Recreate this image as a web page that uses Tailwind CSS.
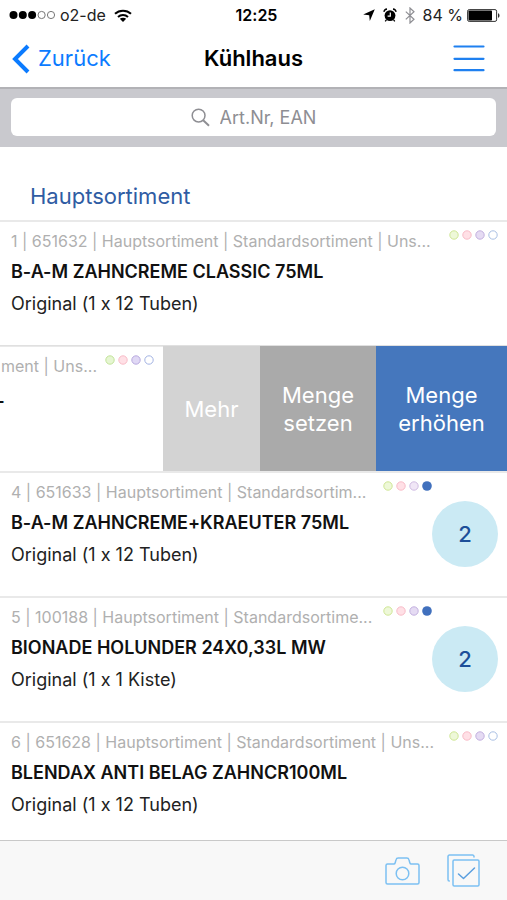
<!DOCTYPE html>
<html lang="de">
<head>
<meta charset="utf-8">
<meta name="viewport" content="width=device-width, initial-scale=1">
<title>Kühlhaus</title>
<script src="https://cdn.jsdelivr.net/npm/@tailwindcss/browser@4"></script>
</head>
<body class="flex h-screen flex-col overflow-hidden bg-white font-['Inter','Liberation_Sans',sans-serif] text-[#111] [font-feature-settings:'calt'_0]">

<div class="grid h-[30px] shrink-0 grid-cols-[1fr_auto_1fr] items-center pl-[9px] pr-[7px] text-base text-[#222]">
  <div class="flex items-center">
    <svg class="h-[10px] w-[47px]" viewBox="0 0 47 10" aria-hidden="true">
      <g fill="#000"><circle cx="4.5" cy="5" r="4"/><circle cx="13.8" cy="5" r="4"/><circle cx="23.1" cy="5" r="4"/></g>
      <g fill="none" stroke="#777"><circle cx="32.6" cy="5" r="3.6"/><circle cx="42" cy="5" r="3.6"/></g>
    </svg>
    <span class="ml-1">o2-de</span>
    <svg class="ml-2 h-[13px] w-[18px]" viewBox="0 0 18 13" aria-hidden="true">
      <g fill="none" stroke="#000" stroke-width="2"><path d="M1 4.8C5.4.6 12.6.6 17 4.8"/><path d="M4 8C6.8 5.4 11.2 5.4 14 8"/></g>
      <path d="M5.8 9.8c1.8-1.5 4.6-1.5 6.4 0L9 13z"/>
    </svg>
  </div>
  <span class="pl-1 font-semibold text-black">12:25</span>
  <div class="flex items-center justify-end">
    <svg class="h-[12px] w-[12px]" viewBox="0 0 12 12" aria-hidden="true"><path d="M11.8.2 6.8 12 6.2 6.2.2 5.4z"/></svg>
    <svg class="ml-2 h-[14px] w-[14px]" viewBox="0 0 14 14" aria-hidden="true">
      <circle cx="7" cy="7.6" r="5.4"/><path d="M.9 3.8C1.2 2.2 2.4 1.2 4 1M13.1 3.8C12.8 2.2 11.6 1.2 10 1M3.4 11.8l-1.2 1.6M10.6 11.8l1.2 1.6" fill="none" stroke="#000" stroke-width="1.3"/>
      <path d="M7.3 4.6v3.5H4.6" fill="none" stroke="#fff" stroke-width="1.2"/>
    </svg>
    <svg class="ml-2 h-[17px] w-[10px]" viewBox="0 0 10 17" fill="none" stroke="#8e8e93" stroke-width="1.2" aria-hidden="true"><path d="M.8 4.6 9 12.2 5 16V1l4 3.8L.8 12.4"/></svg>
    <span class="ml-2">84 %</span>
    <svg class="ml-1 h-[13px] w-[33px]" viewBox="0 0 33 13" aria-hidden="true">
      <rect x=".6" y=".6" width="29" height="11.8" rx="1.6" fill="none" stroke="#333"/><rect x="1.5" y="1.500" width="23.5" height="10" rx=".8"/><path d="M31 4.200c2 .6 2 4 0 4.600z" fill="#333"/>
    </svg>
  </div>
</div>

<header class="grid h-[57px] shrink-0 grid-cols-[1fr_auto_1fr] items-center px-3">
  <button type="button" class="flex items-center gap-2 justify-self-start text-[22px] text-[#0b7bff]">
    <svg class="h-[30px] w-[18px]" viewBox="0 0 18 30" fill="none" stroke="currentColor" stroke-width="4" aria-hidden="true"><path d="M16 2 3 15l13 13"/></svg>
    Zurück
  </button>
  <h1 class="text-[22px] font-semibold text-black">Kühlhaus</h1>
  <button type="button" aria-label="Menü" class="mr-[10px] justify-self-end text-[#1f80f0]">
    <svg class="h-[28px] w-[32px]" viewBox="0 0 32 28" fill="none" stroke="currentColor" stroke-width="2.2" stroke-linecap="round" aria-hidden="true"><path d="M1.500 1.500h29M1.500 13.800h29M1.500 25.200h29"/></svg>
  </button>
</header>

<div class="h-[60px] shrink-0 border-t-2 border-[#b2b2b6] bg-[#c9c9ce] px-[11px] pt-[9px]">
  <label class="flex h-[38px] items-center justify-center gap-[10px] rounded-md bg-white">
    <svg class="h-[19px] w-[19px]" viewBox="0 0 19 19" fill="none" stroke="#8e8e93" stroke-width="1.5" aria-hidden="true"><circle cx="7.6" cy="7.6" r="6.4"/><path d="m12.2 12.2 5.8 5.6" stroke-width="1.9"/></svg>
    <input type="search" aria-label="Suche" placeholder="Art.Nr, EAN" class="field-sizing-content text-[18px] outline-none placeholder:text-[#8e8e93]">
  </label>
</div>

<main class="min-h-0 flex-1 overflow-hidden">
  <h2 class="px-[30px] pb-[8px] pt-[33px] text-[22px] leading-8 text-[#2f5ca3]">Hauptsortiment</h2>
  <ul>
    <li class="flex h-[125px] border-t-2 border-[#e9e9e9] pl-[11px] pr-[9px]">
      <div class="min-w-0 flex-1 whitespace-nowrap pt-[7px]">
        <div class="flex justify-between">
          <p class="text-base leading-6 text-[#b0b0b0]">1 | 651632 | Hauptsortiment | Standardsortiment | Uns...</p>
          <svg class="mt-px h-[10px] w-[49px] shrink-0" viewBox="0 0 49 10" aria-hidden="true"><circle cx="5" cy="5" r="4.2" fill="#eef8d8" stroke="#cfe696"/><circle cx="18" cy="5" r="4.2" fill="#ffe0e6" stroke="#f8bcc8"/><circle cx="31" cy="5" r="4.2" fill="#e5dbf3" stroke="#c3b1df"/><circle cx="44" cy="5" r="4.2" fill="#fff" stroke="#a9bfe3"/></svg>
        </div>
        <h3 class="mt-[5px] text-[18px] font-semibold leading-7">B-A-M ZAHNCREME CLASSIC 75ML</h3>
        <p class="mt-1 text-[18px] leading-7 text-[#222]">Original (1 x 12 Tuben)</p>
      </div>
    </li>

    <li class="flex h-[126px] border-t border-[#e0e0e0]">
      <div class="min-w-0 flex-1 overflow-hidden whitespace-nowrap border-t border-[#e9e9e9] pr-[9px] pt-[7px]">
        <div class="flex justify-end gap-2">
          <p class="text-base leading-6 text-[#b0b0b0]">ment | Uns...</p>
          <svg class="mt-px h-[10px] w-[49px] shrink-0" viewBox="0 0 49 10" aria-hidden="true"><circle cx="5" cy="5" r="4.2" fill="#e6f6d2" stroke="#c2e39a"/><circle cx="18" cy="5" r="4.2" fill="#ffe0e6" stroke="#f8bcc8"/><circle cx="31" cy="5" r="4.2" fill="#e0d8f5" stroke="#b9abdf"/><circle cx="44" cy="5" r="4.2" fill="#fff" stroke="#a3b3e3"/></svg>
        </div>
        <h3 class="-ml-[6px] mt-[5px] text-[18px] font-semibold leading-7">L</h3>
      </div>
      <button type="button" class="w-[97px] bg-[#d3d3d3] text-[22px] leading-7 text-white">Mehr</button>
      <button type="button" class="w-[116px] bg-[#aaaaaa] text-[22px] leading-7 text-white">Menge<br>setzen</button>
      <button type="button" class="w-[131px] bg-[#4577bd] text-[22px] leading-7 text-white">Menge<br>erhöhen</button>
    </li>

    <li class="flex h-[125px] border-t-2 border-[#e9e9e9] pl-[11px] pr-[9px]">
      <div class="min-w-0 flex-1 whitespace-nowrap pt-[7px]">
        <div class="flex justify-between">
          <p class="text-base leading-6 text-[#b0b0b0]">4 | 651633 | Hauptsortiment | Standardsortim...</p>
          <svg class="mt-px h-[10px] w-[49px] shrink-0" viewBox="0 0 49 10" aria-hidden="true"><circle cx="5" cy="5" r="4.2" fill="#eef8d8" stroke="#cfe696"/><circle cx="18" cy="5" r="4.2" fill="#ffe0e6" stroke="#f8bcc8"/><circle cx="31" cy="5" r="4.2" fill="#f0e6f6" stroke="#d0bce2"/><circle cx="44" cy="5" r="4.8" fill="#4070bd"/></svg>
        </div>
        <h3 class="mt-[5px] text-[18px] font-semibold leading-7">B-A-M ZAHNCREME+KRAEUTER 75ML</h3>
        <p class="mt-1 text-[18px] leading-7 text-[#222]">Original (1 x 12 Tuben)</p>
      </div>
      <span class="mt-[28px] flex size-[66px] shrink-0 items-center justify-center rounded-full bg-[#cbeaf4] text-[22px] font-medium text-[#1d4f99]">2</span>
    </li>

    <li class="flex h-[125px] border-t-2 border-[#e9e9e9] pl-[11px] pr-[9px]">
      <div class="min-w-0 flex-1 whitespace-nowrap pt-[7px]">
        <div class="flex justify-between">
          <p class="text-base leading-6 text-[#b0b0b0]">5 | 100188 | Hauptsortiment | Standardsortime...</p>
          <svg class="mt-px h-[10px] w-[49px] shrink-0" viewBox="0 0 49 10" aria-hidden="true"><circle cx="5" cy="5" r="4.2" fill="#eef8d8" stroke="#cfe696"/><circle cx="18" cy="5" r="4.2" fill="#ffe0e6" stroke="#f8bcc8"/><circle cx="31" cy="5" r="4.2" fill="#e5dbf3" stroke="#c3b1df"/><circle cx="44" cy="5" r="4.8" fill="#4070bd"/></svg>
        </div>
        <h3 class="mt-[5px] text-[18px] font-semibold leading-7">BIONADE HOLUNDER 24X0,33L MW</h3>
        <p class="mt-1 text-[18px] leading-7 text-[#222]">Original (1 x 1 Kiste)</p>
      </div>
      <span class="mt-[28px] flex size-[66px] shrink-0 items-center justify-center rounded-full bg-[#cbeaf4] text-[22px] font-medium text-[#1d4f99]">2</span>
    </li>

    <li class="flex h-[125px] border-t-2 border-[#e9e9e9] pl-[11px] pr-[9px]">
      <div class="min-w-0 flex-1 whitespace-nowrap pt-[7px]">
        <div class="flex justify-between">
          <p class="text-base leading-6 text-[#b0b0b0]">6 | 651628 | Hauptsortiment | Standardsortiment | Uns...</p>
          <svg class="mt-px h-[10px] w-[49px] shrink-0" viewBox="0 0 49 10" aria-hidden="true"><circle cx="5" cy="5" r="4.2" fill="#eef8d8" stroke="#cfe696"/><circle cx="18" cy="5" r="4.2" fill="#ffe0e6" stroke="#f8bcc8"/><circle cx="31" cy="5" r="4.2" fill="#e5dbf3" stroke="#c3b1df"/><circle cx="44" cy="5" r="4.2" fill="#fff" stroke="#a9bfe3"/></svg>
        </div>
        <h3 class="mt-[5px] text-[18px] font-semibold leading-7">BLENDAX ANTI BELAG ZAHNCR100ML</h3>
        <p class="mt-1 text-[18px] leading-7 text-[#222]">Original (1 x 12 Tuben)</p>
      </div>
    </li>
  </ul>
</main>

<footer class="flex h-[60px] shrink-0 items-center justify-end gap-[27px] border-t border-[#c9c9c9] bg-[#f8f8f8] pr-[27px] text-[#7cc0f2]">
  <button type="button" aria-label="Kamera">
    <svg class="h-[28px] w-[35px]" viewBox="0 0 35 28" fill="none" stroke="currentColor" stroke-width="1.5" stroke-linejoin="round" aria-hidden="true"><path d="M2.5 7h6.2c.9 0 1.3-.5 1.5-1.3l.8-2.8C11.3 1.7 12 1 13.2 1h8.6c1.2 0 1.9.7 2.2 1.9l.8 2.8c.2.8.6 1.3 1.5 1.3h6.2c.9 0 1.5.6 1.5 1.5v17c0 .9-.6 1.5-1.5 1.5h-30c-.9 0-1.500-.6-1.500-1.500v-17C1 7.600 1.600 7 2.500 7z"/><circle cx="17.500" cy="16.500" r="6.300"/></svg>
  </button>
  <button type="button" aria-label="Auswahl">
    <svg class="h-[33px] w-[33px]" viewBox="0 0 33 33" fill="none" stroke="currentColor" stroke-width="1.5" stroke-linecap="round" stroke-linejoin="round" aria-hidden="true"><path d="M27 3V2.500C27 1.600 26.400 1 25.500 1h-23C1.600 1 1 1.600 1 2.500v23c0 .9.400 1.500 1.300 1.500"/><rect x="6" y="6" width="26" height="26" rx="1.2"/><path d="m11.500 20 5 4.500 11-10.500" stroke="#5b9fdf"/></svg>
  </button>
</footer>
</body>
</html>
